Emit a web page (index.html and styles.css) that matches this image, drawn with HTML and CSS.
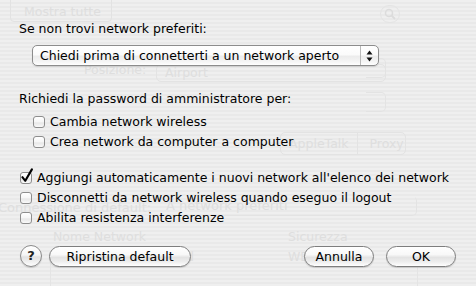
FILE: index.html
```html
<!DOCTYPE html>
<html lang="it">
<head>
<meta charset="utf-8">
<title>Opzioni AirPort</title>
<link rel="stylesheet" href="styles.css">
</head>
<body>
<div class="sheet">
  <div class="backdrop" aria-hidden="true">
    <div class="ghost ghost-btn">Mostra tutte</div>
    <div class="ghost ghost-search"><svg width="12" height="12" viewBox="0 0 12 12"><circle cx="5" cy="5" r="3.5" fill="none" stroke="#dcdcdc" stroke-width="1.6"/><path d="M7.5 7.5L11 11" stroke="#dcdcdc" stroke-width="1.8"/></svg></div>
    <div class="ghost ghost-pos">Posizione:</div>
    <div class="ghost ghost-popup ghost-airport">Airport</div>
    <div class="ghost ghost-popup ghost-r1"></div>
    <div class="ghost ghost-popup ghost-r2"></div>
    <div class="ghost ghost-seg"><span>AppleTalk</span><span>Proxy</span></div>
    <div class="ghost ghost-conn">Connessione di default:</div>
    <div class="ghost ghost-popup ghost-pref">A network preferiti</div>
    <div class="ghost ghost-nome">Nome Network</div>
    <div class="ghost ghost-sic">Sicurezza</div>
    <div class="ghost ghost-wep">WEP</div>
    <div class="ghost ghost-d">d</div>
    <div class="ghost ghost-table"></div>
  </div>

  <div class="content">
    <p class="label">Se non trovi network preferiti:</p>
    <div class="popup">
      <span class="popup-text">Chiedi prima di connetterti a un network aperto</span>
      <span class="popup-arrows">
        <svg width="7" height="12" viewBox="0 0 7 12"><path d="M3.5 0.5L6.5 4.5H0.5Z" fill="#111"/><path d="M3.5 11.5L6.5 7.5H0.5Z" fill="#111"/></svg>
      </span>
    </div>

    <p class="label label-admin">Richiedi la password di amministratore per:</p>
    <div class="checks checks-indent">
      <div class="check"><span class="box"></span><span>Cambia network wireless</span></div>
      <div class="check"><span class="box"></span><span>Crea network da computer a computer</span></div>
    </div>

    <div class="checks checks-main">
      <div class="check"><span class="box checked"><svg class="tick" width="14" height="16" viewBox="0 0 14 16"><path d="M2.4 9.2L5.3 12.8L11.9 1.4" fill="none" stroke="#000" stroke-width="2.1" stroke-linecap="round" stroke-linejoin="round"/></svg></span><span>Aggiungi automaticamente i nuovi network all'elenco dei network</span></div>
      <div class="check"><span class="box"></span><span>Disconnetti da network wireless quando eseguo il logout</span></div>
      <div class="check"><span class="box"></span><span>Abilita resistenza interferenze</span></div>
    </div>

    <div class="footer">
      <button class="help" type="button">?</button>
      <button class="btn btn-reset" type="button">Ripristina default</button>
      <span class="spacer"></span>
      <button class="btn btn-cancel" type="button">Annulla</button>
      <button class="btn btn-ok" type="button">OK</button>
    </div>
  </div>
</div>
</body>
</html>
```

FILE: styles.css
```css
html, body {
  margin: 0;
  padding: 0;
}
body {
  width: 476px;
  height: 286px;
  overflow: hidden;
  font-family: "DejaVu Sans", "Liberation Sans", sans-serif;
  font-size: 12.5px;
  color: #000;
}
.sheet {
  position: relative;
  width: 476px;
  height: 286px;
  background: repeating-linear-gradient(to bottom, #efefef 0, #efefef 2px, #e9e9e9 2px, #e9e9e9 4px);
  overflow: hidden;
}
.backdrop {
  position: absolute;
  inset: 0;
}
.ghost {
  position: absolute;
  color: #dedede;
  font-size: 12.5px;
  white-space: nowrap;
}
.ghost-btn {
  left: 10px;
  top: -4px;
  width: 102px;
  height: 26px;
  border: 1px solid #e2e2e2;
  border-radius: 4px;
  box-sizing: border-box;
  padding: 7px 0 0 13px;
}
.ghost-search {
  left: 380px;
  top: 5px;
  width: 20px;
  height: 18px;
  border-radius: 9px;
  border: 1px solid #e4e4e4;
  box-sizing: border-box;
  padding: 2px 0 0 3px;
}
.ghost-pos { left: 84px; top: 62px; }
.ghost-popup {
  border: 1px solid #e3e3e3;
  border-radius: 5px;
  box-sizing: border-box;
}
.ghost-airport { left: 156px; top: 64px; width: 230px; height: 18px; padding: 0 0 0 8px; line-height: 16px; }
.ghost-r1 { left: 366px; top: 58px; width: 20px; height: 20px; border-left: none; border-radius: 0 5px 5px 0; }
.ghost-r2 { left: 366px; top: 92px; width: 20px; height: 20px; border-left: none; border-radius: 0 5px 5px 0; }
.ghost-seg {
  left: 280px;
  top: 132px;
  width: 126px;
  height: 23px;
  border: 1px solid #e3e3e3;
  border-radius: 5px;
  box-sizing: border-box;
  display: flex;
  line-height: 21px;
}
.ghost-seg span { padding: 0 8px; }
.ghost-seg span + span { border-left: 1px solid #e3e3e3; padding-left: 12px; }
.ghost-conn { left: -2px; top: 200px; font-size: 13px; }
.ghost-pref { left: 165px; top: 196px; width: 252px; height: 20px; line-height: 18px; font-size: 13px; border-color: transparent #e3e3e3 #e3e3e3 transparent; }
.ghost-nome { left: 53px; top: 229px; }
.ghost-sic { left: 288px; top: 229px; }
.ghost-wep { left: 288px; top: 249px; }
.ghost-d { left: 186px; top: 249px; }
.ghost-table {
  left: 50px;
  top: 253px;
  width: 366px;
  height: 40px;
  border-left: 1px solid #e4e4e4;
  border-right: 1px solid #e4e4e4;
}

.content {
  position: relative;
  padding: 21px 20px 0 19px;
}
.label {
  margin: 0;
  line-height: 16px;
  height: 16px;
}
.popup {
  margin: 8px 0 0 13px;
  width: 347px;
  height: 21px;
  box-sizing: border-box;
  border: 1px solid #8c8c8c;
  border-radius: 5px;
  background: linear-gradient(to bottom, #ffffff 0%, #fbfbfb 45%, #ececec 55%, #f6f6f6 85%, #ffffff 100%);
  box-shadow: 0 1px 1px rgba(0,0,0,0.12);
  display: flex;
  align-items: center;
}
.popup-text {
  flex: 1;
  padding-left: 7px;
  line-height: 19px;
}
.popup-arrows {
  width: 17px;
  height: 19px;
  border-left: 1px solid #b9b9b9;
  display: flex;
  align-items: center;
  justify-content: center;
}
.label-admin {
  margin-top: 25px;
}
.checks {
  display: flex;
  flex-direction: column;
  gap: 2px;
}
.checks-indent {
  margin: 6px 0 0 14px;
}
.checks-main {
  margin: 18px 0 0 1px;
}
.check {
  display: flex;
  align-items: center;
  height: 18px;
  line-height: 18px;
}
.box {
  position: relative;
  width: 12px;
  height: 12px;
  box-sizing: border-box;
  border: 1px solid #8d8d8d;
  border-radius: 3px;
  background: linear-gradient(to bottom, #ffffff 0%, #f7f7f7 45%, #e8e8e8 60%, #fafafa 100%);
  margin-right: 5px;
  flex: none;
}
.tick {
  position: absolute;
  left: -1px;
  top: -5px;
}
.footer {
  display: flex;
  align-items: center;
  margin: 18px 0 0 1px;
  height: 22px;
}
.help {
  width: 22px;
  height: 22px;
  border-radius: 50%;
  border: 1px solid #8a8a8a;
  background: linear-gradient(to bottom, #ffffff 0%, #f6f6f6 45%, #e2e2e2 55%, #f4f4f4 85%, #ffffff 100%);
  box-shadow: 0 1px 1px rgba(0,0,0,0.15);
  font-family: "DejaVu Sans", sans-serif;
  font-weight: bold;
  font-size: 13px;
  padding: 0;
  color: #222;
  line-height: 20px;
  margin-right: 7px;
}
.btn {
  height: 21px;
  box-sizing: border-box;
  border: 1px solid #7e7e7e;
  border-radius: 11px;
  background: linear-gradient(to bottom, #ffffff 0%, #f8f8f8 40%, #e3e3e3 55%, #efefef 80%, #ffffff 100%);
  box-shadow: 0 1px 1px rgba(0,0,0,0.15);
  font-family: inherit;
  font-size: 12.5px;
  color: #000;
  padding: 0;
  line-height: 19px;
}
.btn-reset { width: 142px; }
.spacer { flex: 1; }
.btn-cancel { width: 70px; margin-right: 12px; }
.btn-ok { width: 70px; }
```
